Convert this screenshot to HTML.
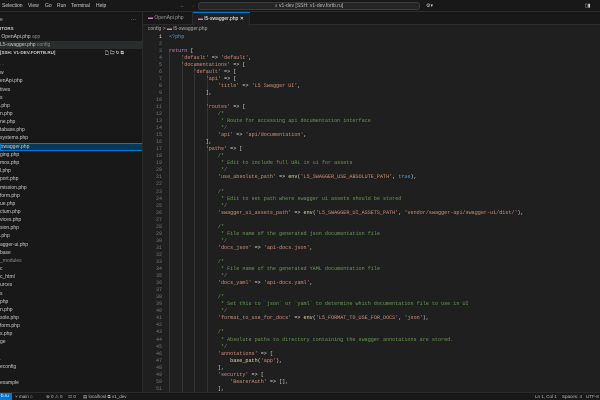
<!DOCTYPE html>
<html style="overflow:hidden;width:600px;height:400px"><head><meta charset="utf-8"><style>
*{margin:0;padding:0;box-sizing:border-box}
body{width:600px;height:400px;overflow:hidden;background:#1f1f1f;font-family:"Liberation Sans",sans-serif;color:#ccc;position:relative}
.title{position:absolute;left:0;top:0;width:600px;height:12px;background:#181818;border-bottom:1px solid #2b2b2b;font-size:5px;color:#ccc;overflow:hidden}
.title span{position:absolute;top:3px}
.search{position:absolute;left:198px;top:2px;width:222px;height:8px;background:#252525;border:1px solid #3a3a3a;border-radius:3px;font-size:5px;color:#bbb;text-align:center;line-height:7px}
.side{position:absolute;left:0;top:12px;width:143px;height:380px;background:#181818;border-right:1px solid #2b2b2b;font-size:5px;color:#ccc;overflow:hidden}
.side div{position:absolute;left:0;width:143px;height:8px;line-height:8px;white-space:nowrap}
.tabs{position:absolute;left:143px;top:12px;width:457px;height:13px;background:#181818;border-bottom:1px solid #2b2b2b}
.tab{position:absolute;top:0;height:13px;font-size:5px;line-height:13px;padding-left:5px;border-right:1px solid #2b2b2b}
.crumb{position:absolute;left:148px;top:26px;font-size:5px;color:#aaa}
.ln{position:absolute;left:143px;width:19px;text-align:right;font:5px "Liberation Mono",monospace;color:#6e7681;line-height:7.04px}
.code{position:absolute;left:169px;font:5.1px "Liberation Mono",monospace;line-height:7.04px;white-space:pre;color:#d4d4d4}
.s{color:#ce9178}.c{color:#6a9955}.f{color:#dcdcaa}.k{color:#569cd6}.p{color:#c586c0}
.guide{position:absolute;width:1px;background:#353535;top:50px;height:342px}
.status{position:absolute;left:0;top:392px;width:600px;height:8px;background:#181818;border-top:1px solid #2b2b2b;font-size:4.5px;color:#bbb;overflow:hidden}
.status span{position:absolute;top:1px}
</style></head><body>
<div class="title">
<span style="left:2px">Selection</span><span style="left:28px">View</span><span style="left:45px">Go</span><span style="left:57px">Run</span><span style="left:71px">Terminal</span><span style="left:96px">Help</span>
<span style="left:180px;color:#aaa">←</span><span style="left:190px;color:#666">→</span>
<div class="search">⌕ v1-dev [SSH: v1-dev.fortb.ru]</div>
<span style="left:426px">⚙▾</span>
<span style="left:585px;color:#ccc">▯▮</span>
</div>
<div class="side">
<div style="top:4px;color:#bbb">e<span style="position:absolute;left:131px">···</span></div>
<div style="top:13px;font-weight:bold;font-size:4.5px">ITORS</div>
<div style="top:21px">&nbsp;OpenApi.php <span style="color:#888">app</span></div>
<div style="top:29px;background:#2a2d2e">L5-swagger.php <span style="color:#888">config</span></div>
<div style="top:37px;font-weight:bold;font-size:4.5px">[SSH: V1-DEV.FORTB.RU]<span style="position:absolute;left:105px;color:#bbb">🗋 🗀 ↻ ⧉</span></div>
<div style="top:48px;color:#666">...</div>
<div style="top:57px">w</div><div style="top:65px">enApi.php</div><div style="top:74px">tives</div><div style="top:82px">s</div>
<div style="top:90px">.php</div><div style="top:98px">n.php</div><div style="top:106px">ne.php</div><div style="top:114px">tabase.php</div>
<div style="top:122px">systems.php</div>
<div style="top:131px;background:#04395e;border:1px solid #0078d4;height:8px;line-height:6px">swagger.php</div>
<div style="top:139px">ging.php</div><div style="top:147px">mos.php</div><div style="top:155px">l.php</div><div style="top:163px">port.php</div>
<div style="top:172px">mission.php</div><div style="top:180px">form.php</div><div style="top:188px">ue.php</div><div style="top:196px">ctum.php</div>
<div style="top:204px">vices.php</div><div style="top:212px">sion.php</div><div style="top:220px">.php</div><div style="top:229px">agger-ui.php</div>
<div style="top:237px">base</div><div style="top:245px;color:#888">_modules</div><div style="top:253px">c</div><div style="top:261px">c_html</div>
<div style="top:269px">urces</div><div style="top:278px">s</div><div style="top:286px">php</div><div style="top:294px">n.php</div>
<div style="top:302px">sole.php</div><div style="top:310px">form.php</div><div style="top:318px">s.php</div><div style="top:326px">ge</div>
<div style="top:343px;color:#888">.</div><div style="top:351px">econfig</div><div style="top:367px">example</div>
</div>
<div class="tabs">
<div class="tab" style="left:0;width:50px;color:#999"><span class="p">▬</span> OpenApi.php</div>
<div class="tab" style="left:50px;width:57px;background:#1f1f1f;color:#fff;border-top:1px solid #0078d4;height:14px"><span class="p">▬</span> l5-swagger.php ✕</div>
</div>
<div class="crumb">config &gt; <span class="p">▬</span> l5-swagger.php</div>
<div class="guide" style="left:169px"></div>
<div class="guide" style="left:182px;top:57px"></div>
<div class="guide" style="left:194px;top:64px"></div>
<div class="guide" style="left:207px;top:71px"></div>
<div class="ln" style="top:33.5px">1<br>2<br>3<br>4<br>5<br>6<br>7<br>8<br>9<br>10<br>11<br>12<br>13<br>14<br>15<br>16<br>17<br>18<br>19<br>20<br>21<br>22<br>23<br>24<br>25<br>26<br>27<br>28<br>29<br>30<br>31<br>32<br>33<br>34<br>35<br>36<br>37<br>38<br>39<br>40<br>41<br>42<br>43<br>44<br>45<br>46<br>47<br>48<br>49<br>50<br>51</div>
<div class="ln" style="top:33.5px;color:#ccc">1</div>
<div class="code" style="top:33.5px"><span class="k">&lt;?php</span>

<span class="p">return</span> [
    <span class="s">'default'</span> =&gt; <span class="s">'default'</span>,
    <span class="s">'documentations'</span> =&gt; [
        <span class="s">'default'</span> =&gt; [
            <span class="s">'api'</span> =&gt; [
                <span class="s">'title'</span> =&gt; <span class="s">'L5 Swagger UI'</span>,
            ],

            <span class="s">'routes'</span> =&gt; [
                <span class="c">/*</span>
<span class="c">                 * Route for accessing api documentation interface</span>
<span class="c">                 */</span>
                <span class="s">'api'</span> =&gt; <span class="s">'api/documentation'</span>,
            ],
            <span class="s">'paths'</span> =&gt; [
                <span class="c">/*</span>
<span class="c">                 * Edit to include full URL in ui for assets</span>
<span class="c">                 */</span>
                <span class="s">'use_absolute_path'</span> =&gt; <span class="f">env</span>(<span class="s">'L5_SWAGGER_USE_ABSOLUTE_PATH'</span>, <span class="k">true</span>),

                <span class="c">/*</span>
<span class="c">                 * Edit to set path where swagger ui assets should be stored</span>
<span class="c">                 */</span>
                <span class="s">'swagger_ui_assets_path'</span> =&gt; <span class="f">env</span>(<span class="s">'L5_SWAGGER_UI_ASSETS_PATH'</span>, <span class="s">'vendor/swagger-api/swagger-ui/dist/'</span>),

                <span class="c">/*</span>
<span class="c">                 * File name of the generated json documentation file</span>
<span class="c">                 */</span>
                <span class="s">'docs_json'</span> =&gt; <span class="s">'api-docs.json'</span>,

                <span class="c">/*</span>
<span class="c">                 * File name of the generated YAML documentation file</span>
<span class="c">                 */</span>
                <span class="s">'docs_yaml'</span> =&gt; <span class="s">'api-docs.yaml'</span>,

                <span class="c">/*</span>
<span class="c">                 * Set this to `json` or `yaml` to determine which documentation file to use in UI</span>
<span class="c">                 */</span>
                <span class="s">'format_to_use_for_docs'</span> =&gt; <span class="f">env</span>(<span class="s">'L5_FORMAT_TO_USE_FOR_DOCS'</span>, <span class="s">'json'</span>),

                <span class="c">/*</span>
<span class="c">                 * Absolute paths to directory containing the swagger annotations are stored.</span>
<span class="c">                 */</span>
                <span class="s">'annotations'</span> =&gt; [
                    <span class="f">base_path</span>(<span class="s">'app'</span>),
                ],
                <span class="s">'security'</span> =&gt; [
                    <span class="s">'BearerAuth'</span> =&gt; [],
                ],</div>
<div class="status">
<span style="left:0;top:0;height:8px;width:12px;background:#0078d4;color:#fff;padding-left:1px">b.ru</span>
<span style="left:15px">⑂ main ○</span><span style="left:46px">⊗ 0 ⚠ 0</span><span style="left:68px">⛫ 0</span><span style="left:83px">▤ localhost ⧉ v1_dev</span>
<span style="left:535px">Ln 1, Col 1</span><span style="left:562px">Spaces: 4</span><span style="left:586px">UTF-8</span>
</div>
</body></html>
